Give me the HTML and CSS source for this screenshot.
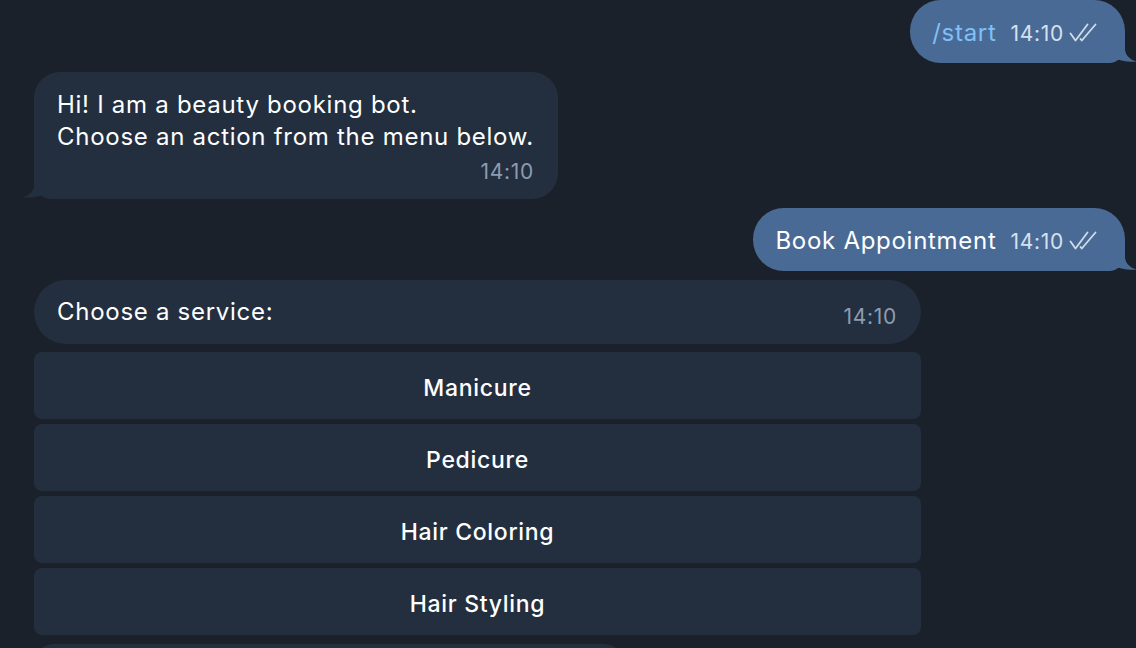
FILE: index.html
```html
<!DOCTYPE html>
<html lang="en">
<head>
<meta charset="utf-8">
<title>Beauty booking bot</title>
<link rel="stylesheet" href="styles.css">
</head>
<body>
<div class="chat">
  <div class="row row-out">
    <div class="bubble bubble-out">
      <span class="msg cmd">/start</span>
      <span class="meta"><span class="time">14:10</span>
        <svg class="checks" viewBox="0 0 30 20" width="30" height="20"><path d="M1.5 10.5 L6.5 17.5 L18.5 1.5 M11.5 16 L12.8 17.5 L26.5 1.5" fill="none" stroke="currentColor" stroke-width="1.8" stroke-linecap="round" stroke-linejoin="round"/></svg>
      </span>
      <svg class="tail tail-out" viewBox="0 0 28 25" width="28" height="25"><path d="M16 0 L16 11 C16 17 21 22 28 23.5 C20 24.5 10 23 3 19 L0 0 Z"/></svg>
    </div>
  </div>

  <div class="row row-in">
    <div class="bubble bubble-in multi">
      <div class="msg">Hi! I am a beauty booking bot.<br>Choose an action from the menu below.</div>
      <div class="time-row"><span class="time">14:10</span></div>
      <svg class="tail tail-in" viewBox="0 0 28 25" width="28" height="25"><path d="M12 0 L12 11 C12 17 7 22 0 23.5 C8 24.5 18 23 25 19 L28 0 Z"/></svg>
    </div>
  </div>

  <div class="row row-out">
    <div class="bubble bubble-out">
      <span class="msg">Book Appointment</span>
      <span class="meta"><span class="time">14:10</span>
        <svg class="checks" viewBox="0 0 30 20" width="30" height="20"><path d="M1.5 10.5 L6.5 17.5 L18.5 1.5 M11.5 16 L12.8 17.5 L26.5 1.5" fill="none" stroke="currentColor" stroke-width="1.8" stroke-linecap="round" stroke-linejoin="round"/></svg>
      </span>
      <svg class="tail tail-out" viewBox="0 0 28 25" width="28" height="25"><path d="M16 0 L16 11 C16 17 21 22 28 23.5 C20 24.5 10 23 3 19 L0 0 Z"/></svg>
    </div>
  </div>

  <div class="bot-block">
    <div class="bubble bubble-in pill">
      <span class="msg">Choose a service:</span>
      <span class="time">14:10</span>
    </div>
    <div class="keyboard">
      <button class="kb-btn">Manicure</button>
      <button class="kb-btn">Pedicure</button>
      <button class="kb-btn">Hair Coloring</button>
      <button class="kb-btn">Hair Styling</button>
    </div>
  </div>

  <div class="row row-in">
    <div class="bubble bubble-in partial"></div>
  </div>
</div>
</body>
</html>
```

FILE: styles.css
```css
html, body {
  margin: 0;
  padding: 0;
  height: 100%;
}

body {
  background: #1b212b;
  font-family: Inter, "Noto Sans", "DejaVu Sans", sans-serif;
  color: #ffffff;
  overflow: hidden;
}

.chat {
  display: flex;
  flex-direction: column;
  gap: 9px;
  padding: 0 11px 0 34px;
}

.row {
  display: flex;
}

.row-out {
  justify-content: flex-end;
}

.row-in {
  justify-content: flex-start;
}

.bubble {
  position: relative;
  box-sizing: border-box;
  font-size: 24px;
  line-height: 32px;
  letter-spacing: 0.72px;
}

.bubble-out {
  background: #4a6a96;
  height: 63px;
  border-radius: 31px 31px 16px 31px;
  display: flex;
  align-items: center;
  padding: 3px 26px 0 22px;
}

.bubble-out .msg {
  color: #ffffff;
}

.bubble-out .cmd {
  color: #7fc0f7;
}

.meta {
  display: flex;
  align-items: center;
  margin-left: 14px;
  margin-top: 2px;
  color: #d2dded;
}

.meta .time {
  color: #d6e1ef;
}

.checks {
  margin-left: 5px;
  margin-top: -2px;
  color: #cfdcec;
}

.bubble-in {
  background: #232f3f;
}

.multi {
  border-radius: 26px 26px 26px 18px;
  padding: 17px 24px 15px 23px;
}

.time-row {
  display: flex;
  justify-content: flex-end;
  margin-top: 7px;
  line-height: 24px;
}

.time {
  font-size: 21px;
  letter-spacing: 0.7px;
  color: #8d9cb0;
}

.tail {
  position: absolute;
  bottom: 0;
}

.tail-in {
  left: -12px;
  fill: #232f3f;
}

.tail-out {
  right: -12px;
  fill: #4a6a96;
}

.bot-block {
  display: flex;
  flex-direction: column;
  width: 887px;
}

.pill {
  height: 64px;
  border-radius: 32px;
  display: flex;
  justify-content: space-between;
  align-items: center;
  padding: 0 24px 0 23px;
}

.pill .time {
  margin-top: 9px;
}

.keyboard {
  display: flex;
  flex-direction: column;
  gap: 5px;
  margin-top: 8px;
}

.kb-btn {
  height: 67px;
  border: none;
  border-radius: 8px;
  background: #232f3f;
  color: #ffffff;
  font-family: Inter, "Noto Sans", sans-serif;
  font-weight: 500;
  font-size: 23px;
  letter-spacing: 0.7px;
  padding: 4px 0 0;
  margin: 0;
}

.partial {
  width: 590px;
  height: 40px;
  border-radius: 26px;
}
```
